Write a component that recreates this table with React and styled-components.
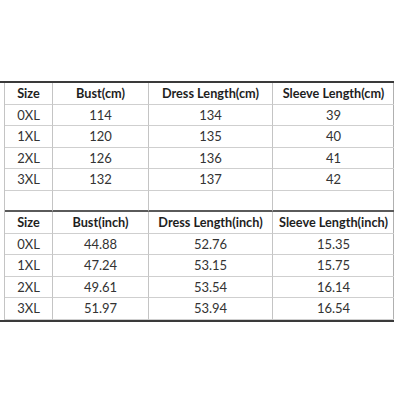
import React from 'react';
import styled, { createGlobalStyle } from 'styled-components';

const GlobalStyle = createGlobalStyle`
    body {
        margin: 0;
        background: #ffffff;
        font-family: Lato, "Open Sans", sans-serif;
    }
`

const Page = styled.div`
    width: 400px;
    height: 400px;
    padding-top: 81px;
    box-sizing: border-box;
    background: #ffffff;
`

const Sheet = styled.div`
    width: 394px;
    border-top: 2px solid #3a3a3a;
    border-bottom: 2px solid #3a3a3a;
`

const Grid = styled.div`
    margin-left: 4px;
    display: grid;
    grid-template-columns: 48px 96px 124px 121px;
    grid-auto-rows: 21.5px;
    border-left: 1px solid #c4c4c4;
    border-right: 1px solid #b0b0b0;
`

const Cell = styled.div`
    display: flex;
    align-items: center;
    justify-content: center;
    box-sizing: border-box;
    border-right: 1px solid #c4c4c4;
    border-bottom: ${props => props.$heavy ? '2px solid #5a5a5a' : '1px solid #cfcfcf'};
    font-size: ${props => props.$head ? '12.7px' : '13px'};
    font-weight: ${props => props.$head ? 700 : 400};
    color: ${props => props.$head ? '#1e1e1e' : '#333333'};
    white-space: nowrap;
    &:nth-child(4n) {
        border-right: none;
    }
`

const cmRows = [
    ['0XL', '114', '134', '39'],
    ['1XL', '120', '135', '40'],
    ['2XL', '126', '136', '41'],
    ['3XL', '132', '137', '42'],
]

const inchRows = [
    ['0XL', '44.88', '52.76', '15.35'],
    ['1XL', '47.24', '53.15', '15.75'],
    ['2XL', '49.61', '53.54', '16.14'],
    ['3XL', '51.97', '53.94', '16.54'],
]

const Row = ({ cells, head, heavy }) => (
    <>
        {cells.map((text, i) => (
            <Cell key={i} $head={head} $heavy={heavy}>{text}</Cell>
        ))}
    </>
)

const App = () => (
    <Page>
        <GlobalStyle />
        <Sheet>
            <Grid>
                <Row head cells={['Size', 'Bust(cm)', 'Dress Length(cm)', 'Sleeve Length(cm)']} />
                {cmRows.map((r, i) => <Row key={'c' + i} cells={r} />)}
                <Row heavy cells={['', '', '', '']} />
                <Row head cells={['Size', 'Bust(inch)', 'Dress Length(inch)', 'Sleeve Length(inch)']} />
                {inchRows.map((r, i) => <Row key={'i' + i} cells={r} />)}
            </Grid>
        </Sheet>
    </Page>
)

export default App;
